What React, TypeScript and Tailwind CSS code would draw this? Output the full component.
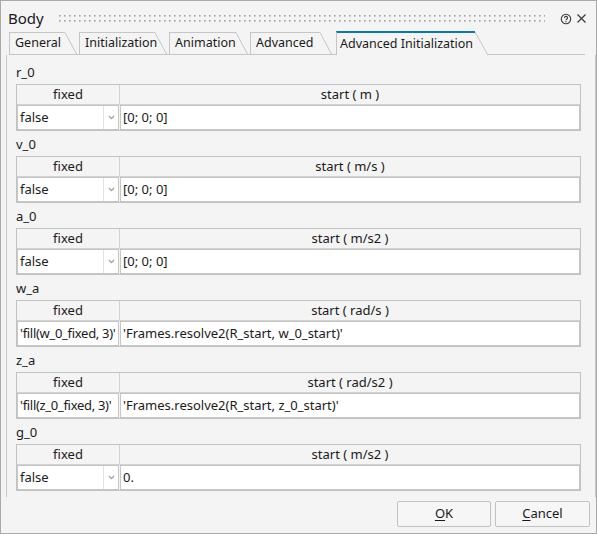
import React from 'react';

type Row = {
  label: string;
  unit: string;
  fixed: string;
  value: string;
  combo: boolean;
};

const rows: Row[] = [
  { label: 'r_0', unit: 'start ( m )', fixed: 'false', value: '[0; 0; 0]', combo: true },
  { label: 'v_0', unit: 'start ( m/s )', fixed: 'false', value: '[0; 0; 0]', combo: true },
  { label: 'a_0', unit: 'start ( m/s2 )', fixed: 'false', value: '[0; 0; 0]', combo: true },
  { label: 'w_a', unit: 'start ( rad/s )', fixed: "'fill(w_0_fixed, 3)'", value: "'Frames.resolve2(R_start, w_0_start)'", combo: false },
  { label: 'z_a', unit: 'start ( rad/s2 )', fixed: "'fill(z_0_fixed, 3)'", value: "'Frames.resolve2(R_start, z_0_start)'", combo: false },
  { label: 'g_0', unit: 'start ( m/s2 )', fixed: 'false', value: '0.', combo: true },
];

const tabs = [
  { name: 'General', w: 'w-[56px]' },
  { name: 'Initialization', w: 'w-[76px]' },
  { name: 'Animation', w: 'w-[67px]' },
  { name: 'Advanced', w: 'w-[70px]' },
];

function Slant({ h }: { h: number }) {
  // slanted right edge of a tab
  return (
    <svg width="12" height={h} className="shrink-0">
      <line x1="0" y1="0.5" x2="11.5" y2={h} stroke="#c6c6c6" strokeWidth="1" />
    </svg>
  );
}

function ParamTable({ row }: { row: Row }) {
  return (
    <div className="flex flex-col">
      <div className="h-[16px] leading-[16px]">{row.label}</div>
      <div className="mt-[4px] h-[47px] border border-[#c2c2c2] bg-[#f4f4f4] flex flex-col">
        <div className="h-[20px] grid grid-cols-[102px_1fr] border-b border-[#d2d2d2]">
          <div className="flex items-center justify-center">fixed</div>
          <div className="flex items-center justify-center border-l border-[#d2d2d2]">{row.unit}</div>
        </div>
        <div className="flex-1 grid grid-cols-[102px_1fr] gap-[1px]">
          {row.combo ? (
            <div className="bg-white border border-[#c6c6c6] flex">
              <div className="flex-1 flex items-center pl-[2px]">{row.fixed}</div>
              <div className="w-[15px] border-l border-[#e2e2e2] flex items-center justify-center">
                <svg width="7" height="5" viewBox="0 0 7 5">
                  <path d="M1 1 L3.5 3.6 L6 1" fill="none" stroke="#9a9a9a" strokeWidth="1.1" />
                </svg>
              </div>
            </div>
          ) : (
            <div className="bg-white border border-[#c6c6c6] flex items-center pl-[2px] whitespace-nowrap overflow-hidden tracking-[-0.3px]">
              {row.fixed}
            </div>
          )}
          <div className="bg-white border border-[#c6c6c6] flex items-center pl-[2px] whitespace-nowrap overflow-hidden">
            {row.value}
          </div>
        </div>
      </div>
    </div>
  );
}

export default function App() {
  return (
    <div className="w-[597px] h-[534px] bg-[#f4f4f4] border border-[#aaaaaa] flex flex-col text-[13px] text-[#1a1a1a] font-['Noto_Sans',_'Liberation_Sans',_sans-serif]">
      {/* Title bar */}
      <div className="h-[28px] pt-[7px] flex items-center pl-[7px] pr-[9px]">
        <span className="text-[15px] leading-none">Body</span>
        <svg className="flex-1 mx-[15px] h-[7px]" height="7">
          <defs>
            <pattern id="grip" width="5" height="5" patternUnits="userSpaceOnUse">
              <rect x="0" y="0" width="1.6" height="1.6" fill="#a0a0a0" />
            </pattern>
          </defs>
          <rect x="0" y="0" width="100%" height="7" fill="url(#grip)" />
        </svg>
        <svg width="12" height="12" viewBox="0 0 12 12" className="mr-[4px]">
          <circle cx="6" cy="6" r="4.7" fill="none" stroke="#3a3a3a" strokeWidth="1.1" />
          <path d="M4.5 4.9 A1.5 1.5 0 1 1 6.7 6.2 C6.2 6.5 6 6.8 6 7.3" fill="none" stroke="#3a3a3a" strokeWidth="1.1" />
          <circle cx="6" cy="8.7" r="0.65" fill="#3a3a3a" />
        </svg>
        <svg width="11" height="11" viewBox="0 0 11 11">
          <path d="M1.5 1.5 L9.5 9.5 M9.5 1.5 L1.5 9.5" stroke="#3a3a3a" strokeWidth="1.2" />
        </svg>
      </div>

      {/* Tabs */}
      <div className="h-[26px] flex items-end pl-[8px] text-[12.5px]">
        {tabs.map((t) => (
          <div key={t.name} className="flex items-end border-b border-[#c6c6c6] pr-[2px]">
            <div className={`${t.w} h-[22px] border-l border-t border-[#c6c6c6] flex items-center pl-[5px]`}>
              {t.name}
            </div>
            <Slant h={22} />
          </div>
        ))}
        <div className="w-[2px] h-[1px] bg-[#c6c6c6]" />
        <div className="flex items-end">
          <div className="w-[139px] h-[24px] border-l border-[#c6c6c6] border-t-2 border-t-[#0a78b4] flex items-center pl-[3px] whitespace-nowrap">
            Advanced Initialization
          </div>
          <svg width="13" height="24" className="shrink-0">
            <line x1="0" y1="1" x2="12.5" y2="23.5" stroke="#c6c6c6" strokeWidth="1" />
            <line x1="12" y1="23.5" x2="13" y2="23.5" stroke="#c6c6c6" strokeWidth="1" />
          </svg>
        </div>
        <div className="flex-1 mr-[11px] border-b border-[#c6c6c6]" />
      </div>

      {/* Pane */}
      <div className="flex-1 ml-[5px] border-l border-r border-[#c6c6c6] pl-[9px] pr-[14px] pt-[9px] flex flex-col gap-[5px]">
        {rows.map((r) => (
          <ParamTable key={r.label} row={r} />
        ))}
      </div>

      {/* Buttons */}
      <div className="h-[36px] pt-[4px] pb-[6px] pr-[6px] flex justify-end gap-[4px]">
        <button className="w-[94px] h-[26px] border border-[#c2c2c2] rounded-[2px] bg-[#f6f6f6] flex items-center justify-center">
          <span>
            <span className="underline underline-offset-2">O</span>K
          </span>
        </button>
        <button className="w-[95px] h-[26px] border border-[#c2c2c2] rounded-[2px] bg-[#f6f6f6] flex items-center justify-center">
          <span>
            <span className="underline underline-offset-2">C</span>ancel
          </span>
        </button>
      </div>
    </div>
  );
}
